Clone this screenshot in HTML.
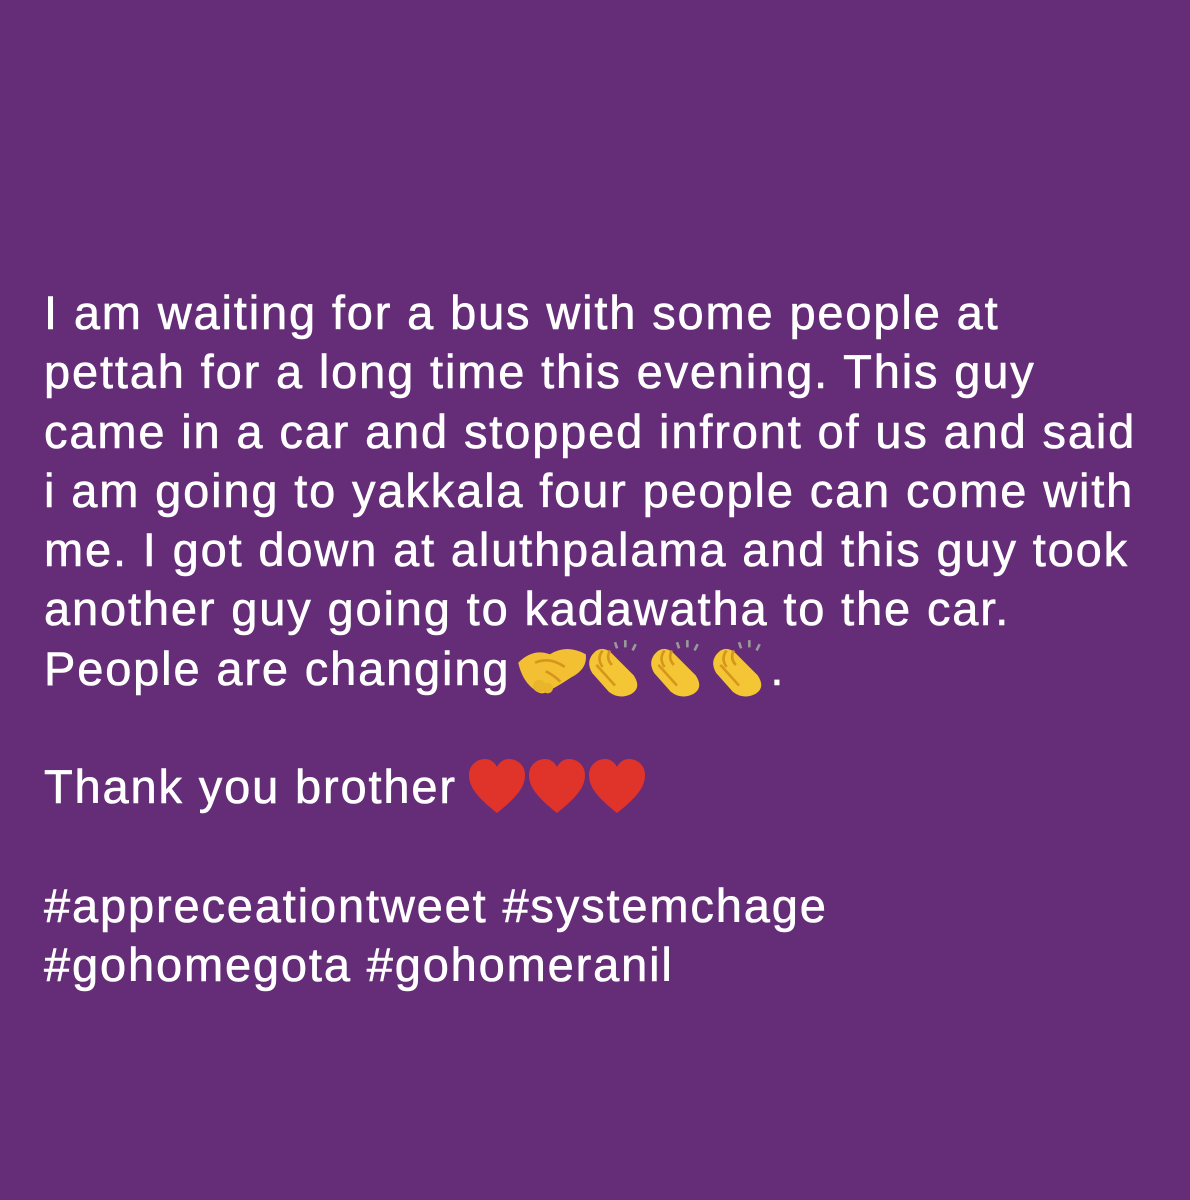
<!DOCTYPE html>
<html><head><meta charset="utf-8"><style>
html,body{margin:0;padding:0}
body{width:1190px;height:1200px;background:#652C78;overflow:hidden;position:relative}
.t{position:absolute;left:44px;top:283px;color:#fff;font-family:"Liberation Sans",Arial,sans-serif;font-size:47px;line-height:59.3px;white-space:nowrap;letter-spacing:1.85px;-webkit-text-stroke:0.6px #fff}
.e{display:inline-block;vertical-align:-12px;width:62px;height:58px}
</style></head><body>
<div class="t">I am waiting for a bus with some people at<br>pettah for a long time this evening. This guy<br>came in a car and stopped infront of us and said<br>i am going to yakkala four people can come with<br>me. I got down at aluthpalama and this guy took<br>another guy going to kadawatha to the car.<br>People are changing<svg class="e" viewBox="0 0 72 54" style="width:76px;margin-left:4px;margin-right:-6px"><path d="M4 22 q14 -14 30 -8 q16 -10 34 0 q2 14 -14 22 q-12 8 -20 12 q-8 6 -14 0 q-12 -8 -16 -26z" fill="#F2C032"/><path d="M20 22 q14 -6 28 4 M30 30 q8 4 14 10" stroke="#D6961C" stroke-width="2.5" fill="none"/><circle cx="24" cy="44" r="6" fill="#E9B52B"/><circle cx="32" cy="46" r="5" fill="#E9B52B"/></svg><svg class="e" viewBox="0 0 60 54"><path d="M8 14 q8 -10 18 -2 l22 22 q8 12 -2 18 q-12 6 -22 -2 l-16 -18 q-6 -10 0 -18z" fill="#F4C534"/><path d="M18 10 q-6 8 0 16 M25 10 q-4 8 2 14 M12 24 l18 20" stroke="#D6961C" stroke-width="2.5" fill="none"/><path d="M30 2 l2 6 M40 0 l0 7 M50 4 l-3 6" stroke="#9a9a9a" stroke-width="2.5"/></svg><svg class="e" viewBox="0 0 60 54"><path d="M8 14 q8 -10 18 -2 l22 22 q8 12 -2 18 q-12 6 -22 -2 l-16 -18 q-6 -10 0 -18z" fill="#F4C534"/><path d="M18 10 q-6 8 0 16 M25 10 q-4 8 2 14 M12 24 l18 20" stroke="#D6961C" stroke-width="2.5" fill="none"/><path d="M30 2 l2 6 M40 0 l0 7 M50 4 l-3 6" stroke="#9a9a9a" stroke-width="2.5"/></svg><svg class="e" viewBox="0 0 60 54"><path d="M8 14 q8 -10 18 -2 l22 22 q8 12 -2 18 q-12 6 -22 -2 l-16 -18 q-6 -10 0 -18z" fill="#F4C534"/><path d="M18 10 q-6 8 0 16 M25 10 q-4 8 2 14 M12 24 l18 20" stroke="#D6961C" stroke-width="2.5" fill="none"/><path d="M30 2 l2 6 M40 0 l0 7 M50 4 l-3 6" stroke="#9a9a9a" stroke-width="2.5"/></svg>.<br><br>Thank you brother<svg class="e" viewBox="0 0 60 56" style="width:60px;height:56px;margin-left:10px"><path d="M30 54 C10 38 2 28 2 16 C2 6 10 0 18 0 C24 0 28 4 30 8 C32 4 36 0 42 0 C50 0 58 6 58 16 C58 28 50 38 30 54Z" fill="#E0342A"/></svg><svg class="e" viewBox="0 0 60 56" style="width:60px;height:56px"><path d="M30 54 C10 38 2 28 2 16 C2 6 10 0 18 0 C24 0 28 4 30 8 C32 4 36 0 42 0 C50 0 58 6 58 16 C58 28 50 38 30 54Z" fill="#E0342A"/></svg><svg class="e" viewBox="0 0 60 56" style="width:60px;height:56px"><path d="M30 54 C10 38 2 28 2 16 C2 6 10 0 18 0 C24 0 28 4 30 8 C32 4 36 0 42 0 C50 0 58 6 58 16 C58 28 50 38 30 54Z" fill="#E0342A"/></svg><br><br>#appreceationtweet #systemchage<br>#gohomegota #gohomeranil</div>
</body></html>
